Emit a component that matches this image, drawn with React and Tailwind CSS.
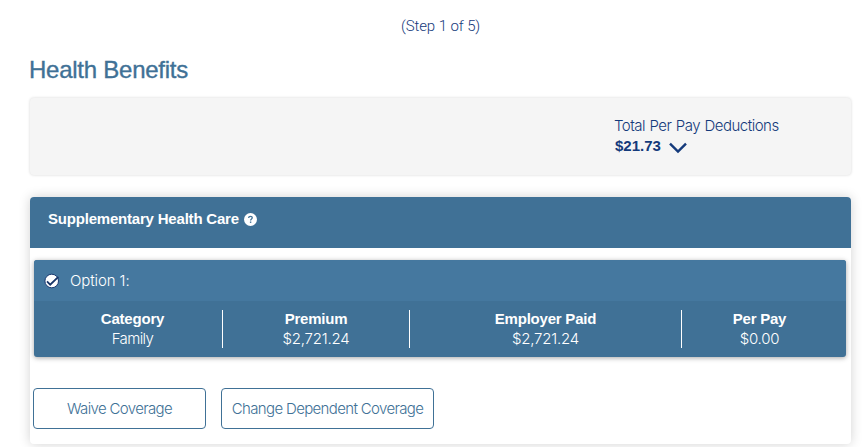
const LIGHT = "font-['Inter','Liberation_Sans',sans-serif] font-light";
const BOLD = "font-['Liberation_Sans',sans-serif] font-bold";

function Chevron() {
  return (
    <svg width="18" height="12" viewBox="0 0 18 12" fill="none" className="mt-[3px]">
      <path d="M1 1.6 9 9.6l8-8" stroke="#143a7b" strokeWidth="2.4" />
    </svg>
  );
}

function Help() {
  return (
    <svg width="13" height="13" viewBox="0 0 13 13" fill="none">
      <circle cx="6.5" cy="6.5" r="6.5" fill="#fff" />
      <path d="M4.7 5.1C4.7 3.9 5.4 3.3 6.5 3.3S8.3 3.9 8.3 4.8C8.3 6 6.6 6 6.6 7.5" stroke="#407196" strokeWidth="1.3" />
      <rect x="5.9" y="8.5" width="1.4" height="1.4" fill="#407196" />
    </svg>
  );
}

function Check() {
  return (
    <svg width="16" height="16" viewBox="0 0 16 16" fill="none">
      <circle cx="7.7" cy="8" r="6.8" fill="#fff" stroke="#1b3a70" strokeWidth="1" />
      <path d="M3 8.4 6.2 11.7 14.3 3.8" stroke="#173467" strokeWidth="1.8" />
    </svg>
  );
}

function Column({ width, title, value, valueTracking = "tracking-[-0.2px]", divider }) {
  return (
    <div className={`${width} h-[38px] text-center text-white ${divider ? "border-r border-white" : ""}`}>
      <div className={`${BOLD} h-[19px] text-[15px] leading-[17px] tracking-[-0.22px]`}>{title}</div>
      <div className={`${LIGHT} h-[20px] text-[15px] leading-[20px] ${valueTracking}`}>{value}</div>
    </div>
  );
}

export default function App() {
  return (
    <div className="h-[447px] w-[863px] overflow-hidden bg-white pt-4">
      <div className="ml-[401px] h-5 whitespace-nowrap font-['Roboto',sans-serif] text-[15px] font-light leading-5 tracking-[-0.1px] text-[#143a7b]">
        (Step 1 of 5)
      </div>
      <h1 className="ml-[29px] mt-[19px] h-[30px] whitespace-nowrap font-['Liberation_Sans',sans-serif] text-[24px] leading-[30px] tracking-[-0.25px] text-[#407196] [-webkit-text-stroke:0.35px_#407196]">
        Health Benefits
      </h1>
      <section className="ml-[30px] mt-[13px] h-[77px] w-[821px] rounded-[4px] bg-[#f5f5f5] pl-[584px] pt-[18px] text-[#143a7b] shadow-[0_0_3px_rgba(0,0,0,0.17)]">
        <div className={`${LIGHT} h-5 whitespace-nowrap text-[15px] leading-5 tracking-[-0.5px] [word-spacing:0.7px]`}>Total Per Pay Deductions</div>
        <div className="flex h-5 items-center gap-2 pl-px">
          <span className={`${BOLD} text-[15px] leading-5`}>$21.73</span>
          <Chevron />
        </div>
      </section>

      <section className="ml-[30px] mt-[22px] h-[247px] w-[821px] rounded-[4px] bg-white shadow-[0_0_12px_rgba(0,0,0,0.18)]">
        <header className="flex h-[51px] items-start gap-[5px] rounded-t-[4px] bg-[#407196] pl-[18px] pt-3 text-white">
          <span className={`${BOLD} whitespace-nowrap text-[15px] leading-5 tracking-[-0.2px]`}>Supplementary Health Care</span>
          <span className="mt-[4px]"><Help /></span>
        </header>
        <div className="ml-1 mt-3 h-[97px] w-[812px] overflow-hidden rounded-[3px] bg-[#407196] shadow-[0_1px_5px_rgba(0,0,0,0.35)]">
          <div className="flex h-[41px] items-center gap-[10px] bg-[#45789f] pl-[10px] text-white">
            <Check />
            <span className={`${LIGHT} text-[15px] leading-5 tracking-[-0.1px]`}>Option 1:</span>
          </div>
          <div className="flex pl-[9px] pt-[9px]">
            <Column width="w-[180px]" title="Category" value="Family" valueTracking="tracking-[-0.6px]" divider />
            <Column width="w-[187px]" title="Premium" value="$2,721.24" divider />
            <Column width="w-[272px]" title="Employer Paid" value="$2,721.24" divider />
            <Column width="w-[155px]" title="Per Pay" value="$0.00" />
          </div>
        </div>
        <div className={`${LIGHT} ml-[3px] mt-[31px] flex gap-[15px] text-[15px] tracking-[-0.65px] text-[#407196] [word-spacing:0.8px]`}>
          <button className="h-[41px] w-[173px] whitespace-nowrap rounded-[4px] border border-[#407196] pt-px">Waive Coverage</button>
          <button className="h-[41px] w-[213px] whitespace-nowrap rounded-[4px] border border-[#407196] pt-px">Change Dependent Coverage</button>
        </div>
      </section>
    </div>
  );
}
